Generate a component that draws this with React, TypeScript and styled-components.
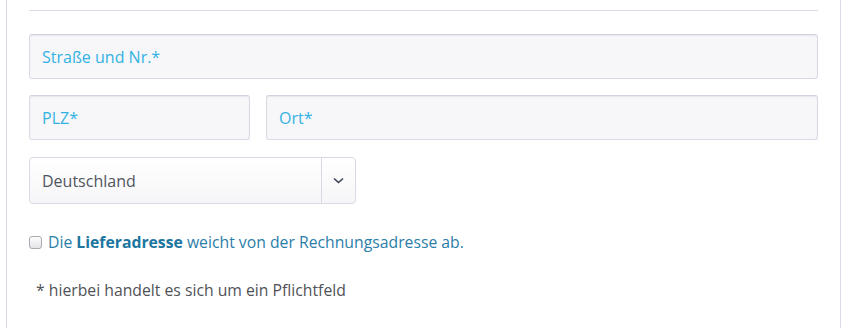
import React from "react";
import styled, { createGlobalStyle } from "styled-components";

const Global = createGlobalStyle`
  html, body { margin: 0; padding: 0; background: #fff; }
  body { font-family: "Open Sans", "Liberation Sans", sans-serif; }
  * { box-sizing: border-box; }
`;

const Panel = styled.div`
  margin-left: 6px;
  width: 835px;
  height: 328px;
  border-left: 1px solid #dcd9e5;
  border-right: 1px solid #dcd9e5;
  padding: 10px 22px 0 22px;
  display: flex;
  flex-direction: column;
`;

const Rule = styled.div`
  height: 1px;
  background: #dedbe8;
  margin-bottom: 23px;
`;

const Row = styled.div<{ $cols?: string; $mb: number }>`
  display: grid;
  grid-template-columns: ${(p) => p.$cols ?? "1fr"};
  column-gap: 16px;
  margin-bottom: ${(p) => p.$mb}px;
`;

const Input = styled.input`
  height: 45px;
  width: 100%;
  border: 1px solid #dcd9e6;
  border-top-color: #d3d0e0;
  border-radius: 3px;
  background: #f7f7fa;
  box-shadow: inset 0 1px 1px rgba(120, 110, 160, 0.12);
  padding: 0 12px;
  font-family: "Open Sans", "Liberation Sans", sans-serif;
  font-size: 16px;
  color: #555;
  outline: none;
  &::placeholder {
    color: #33b2e3;
    opacity: 1;
  }
`;

const Select = styled.div`
  width: 327px;
  height: 47px;
  border: 1px solid #dcd9e6;
  border-radius: 4px;
  background: linear-gradient(#ffffff, #f6f6f8);
  display: flex;
  align-items: stretch;
  margin-bottom: 27px;
`;

const SelectValue = styled.div`
  flex: 1;
  display: flex;
  align-items: center;
  padding-left: 12px;
  font-size: 16px;
  color: #505560;
`;

const SelectArrow = styled.div`
  width: 34px;
  border-left: 1px solid #dcd9e6;
  display: flex;
  align-items: center;
  justify-content: center;
  color: #3a4156;
`;

const CheckRow = styled.label`
  display: flex;
  align-items: center;
  gap: 6px;
  font-size: 15.75px;
  color: #2b7ea8;
  margin-bottom: 26px;
`;

const Box = styled.span`
  width: 13px;
  height: 13px;
  border: 1px solid #a9a9b0;
  border-radius: 3px;
  background: linear-gradient(#fdfdfd, #e4e4e8);
  flex: none;
`;

const Strong = styled.b`
  font-weight: 700;
  color: #1c76a0;
`;

const Note = styled.p`
  margin: 0 0 0 7px;
  font-size: 15.75px;
  color: #505258;
`;

export default function App() {
  return (
    <>
      <Global />
      <Panel>
        <Rule />
        <Row $mb={16}>
          <Input placeholder="Straße und Nr.*" />
        </Row>
        <Row $cols="221px 1fr" $mb={17}>
          <Input placeholder="PLZ*" />
          <Input placeholder="Ort*" />
        </Row>
        <Select>
          <SelectValue>Deutschland</SelectValue>
          <SelectArrow>
            <svg width="11" height="7" viewBox="0 0 11 7">
              <path d="M1 1.5 L5.5 5.5 L10 1.5" fill="none" stroke="currentColor" strokeWidth="1.6" />
            </svg>
          </SelectArrow>
        </Select>
        <CheckRow>
          <Box />
          <span>
            Die <Strong>Lieferadresse</Strong> weicht von der Rechnungsadresse ab.
          </span>
        </CheckRow>
        <Note>* hierbei handelt es sich um ein Pflichtfeld</Note>
      </Panel>
    </>
  );
}
